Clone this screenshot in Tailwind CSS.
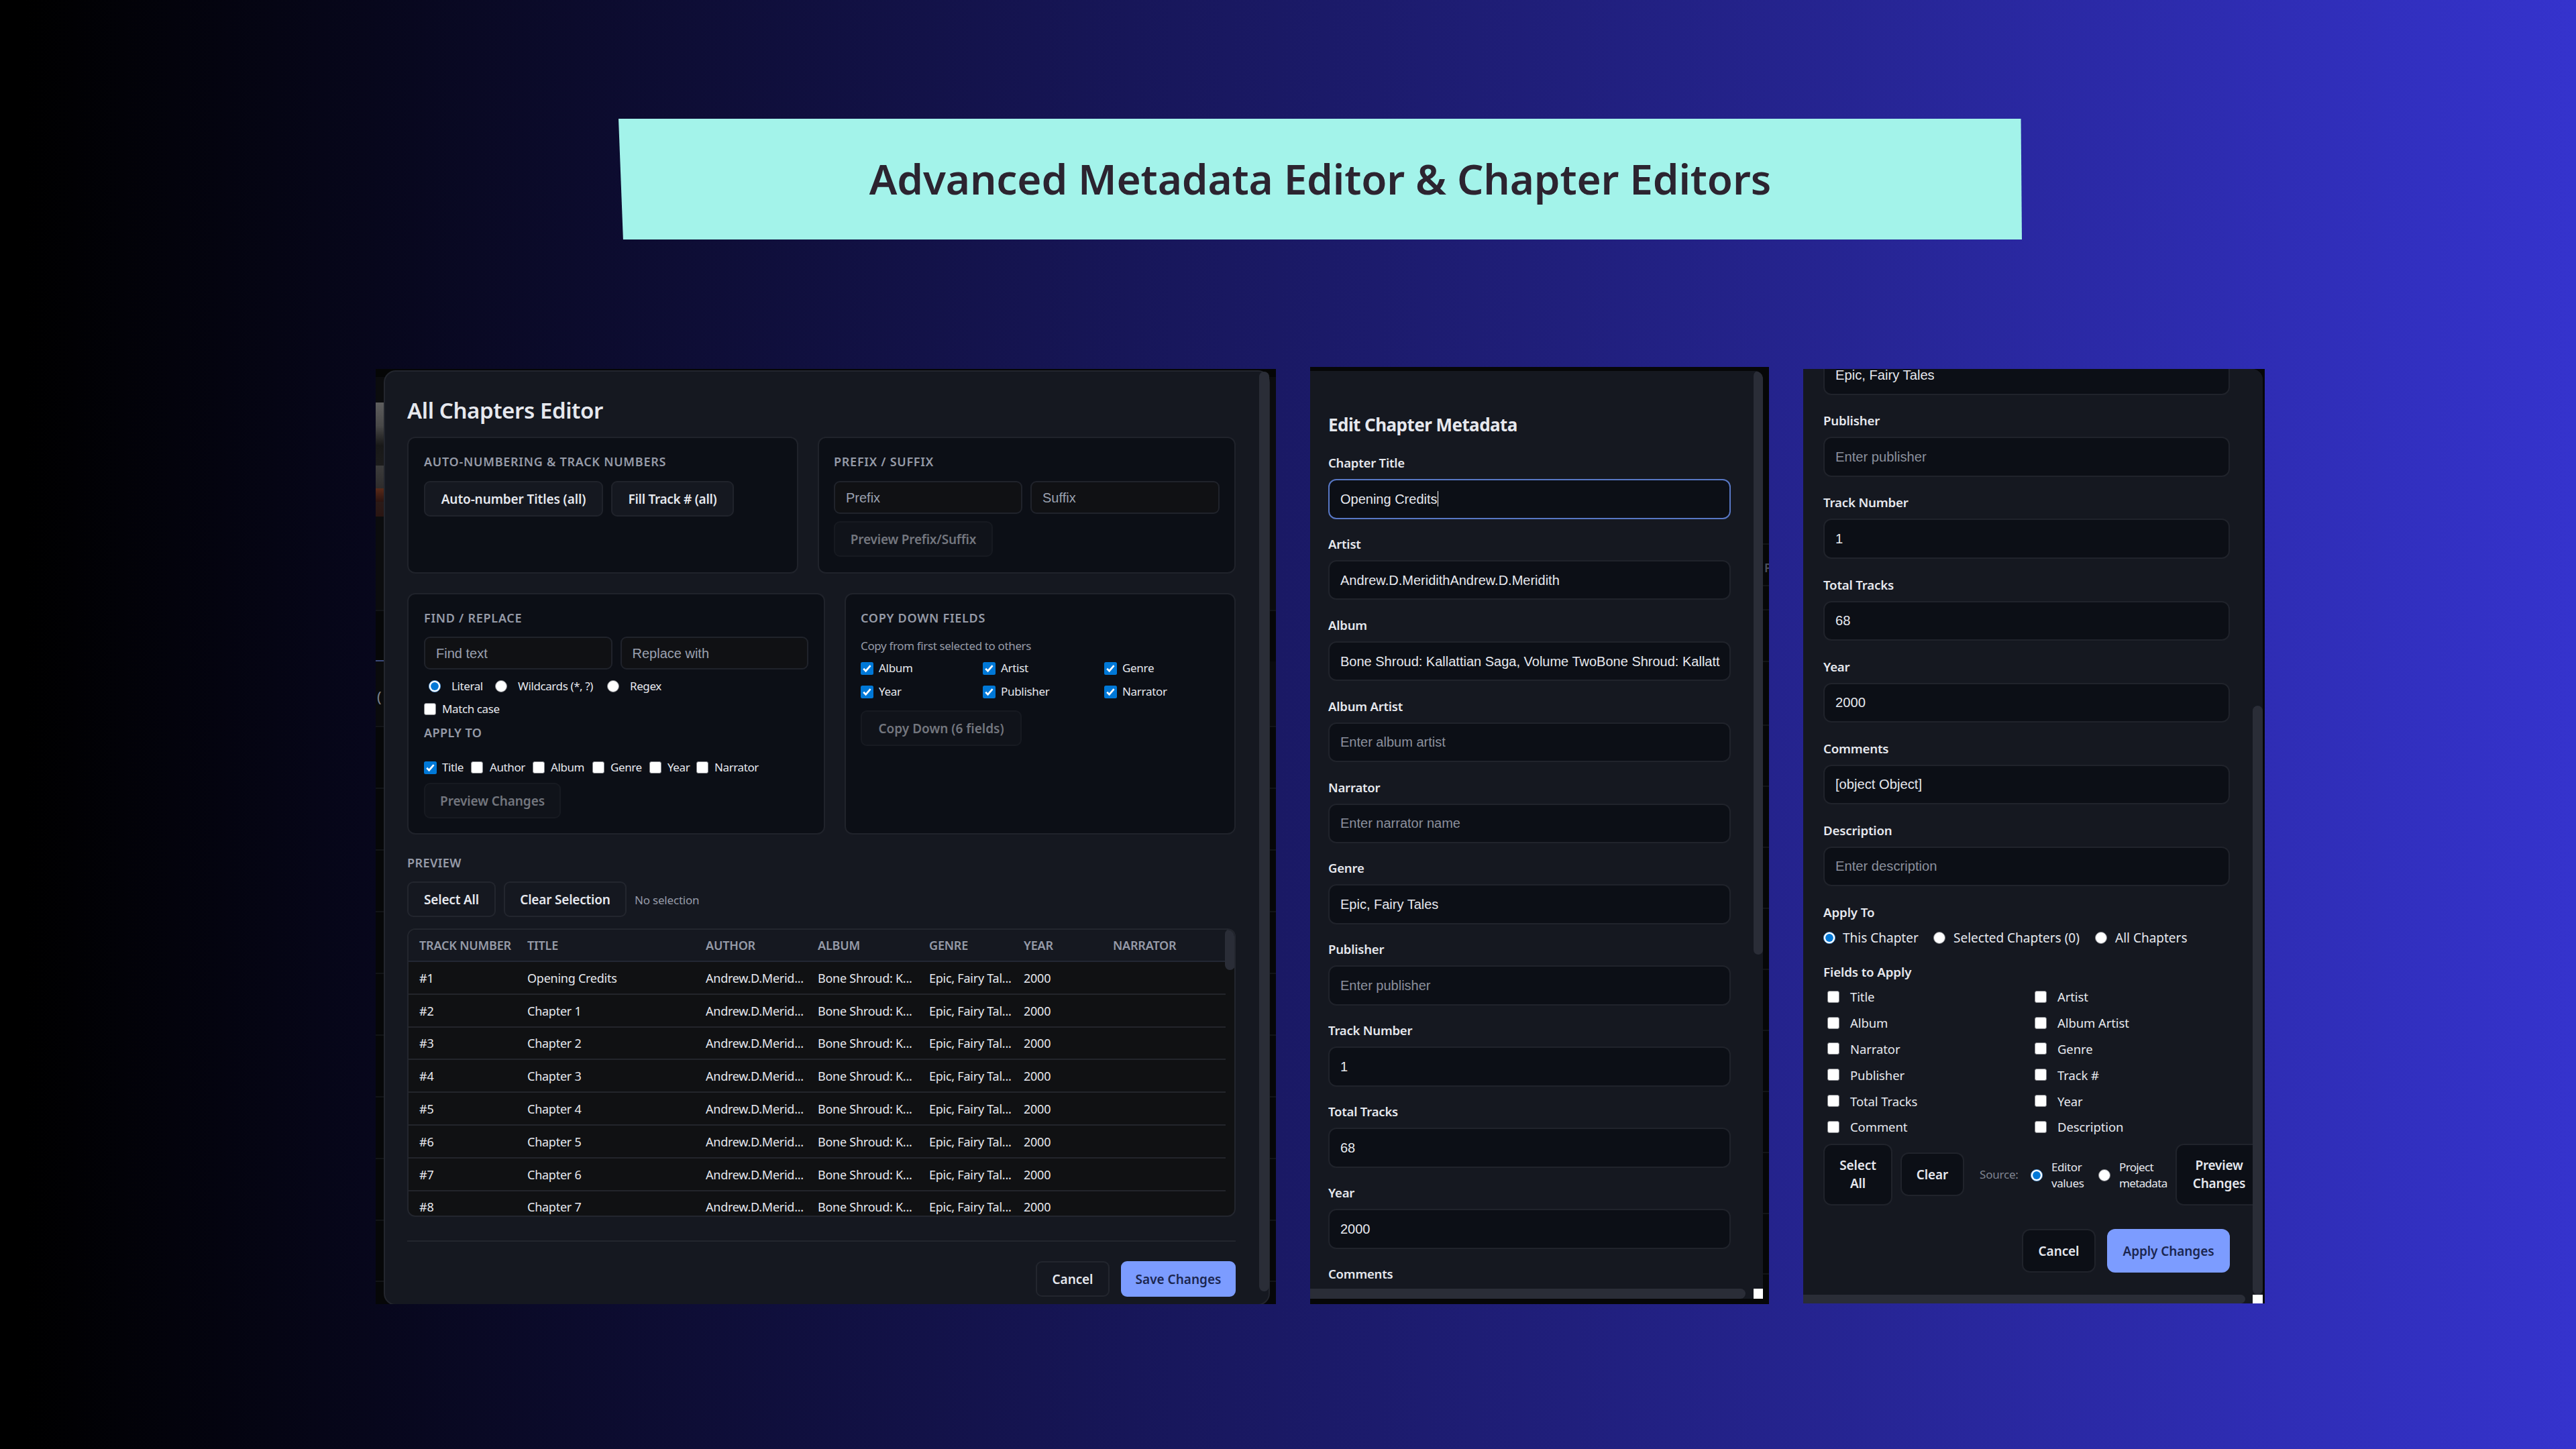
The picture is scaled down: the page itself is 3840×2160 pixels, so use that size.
<!DOCTYPE html>
<html lang="en">
<head>
    <meta charset="UTF-8">
    <meta name="viewport" content="width=device-width, initial-scale=1.0">
    <title>Advanced Metadata Editor & Chapter Editors</title>
    <script src="https://cdn.jsdelivr.net/npm/@tailwindcss/browser@4"></script>
</head>
<body class="w-[3840px] h-[2160px] overflow-hidden bg-linear-to-r/srgb from-black from-1% to-[#3533cd] font-['Noto_Sans',sans-serif] text-[#e6e8ee]">
    <header class="pt-[177px] pl-[922px]">
        <div class="w-[2092px] h-[180px] bg-[#a3f3ea] [clip-path:polygon(0_0,99.93%_0,100%_100%,0.33%_100%)] flex items-center justify-center">
            <h1 class="text-[62px] leading-[90px] pb-[2px] font-semibold tracking-[-0.15px] text-[#2c2430] whitespace-nowrap">Advanced Metadata Editor &amp; Chapter Editors</h1>
        </div>
    </header>

    <main class="flex items-start pl-[560px] pt-[190px]">

        <!-- All chapters editor -->
        <section class="relative w-[1342px] h-[1394px] mt-[3px] pl-[12px] pt-[2px] bg-[#060708] overflow-hidden">
            <!-- page behind the modal -->
            <div id="behindAll" class="absolute inset-0">
                <div class="absolute left-0 top-0 w-full h-[360px] bg-[#0b0c0e]"></div>
                <div class="absolute left-0 top-0 w-full h-[12px] bg-[#050606]"></div>
                <div class="absolute left-0 top-[436px] w-full h-[96px] bg-[#0a0b0d]"></div>
                <div class="absolute left-0 top-[50px] w-[12px] h-[170px] bg-linear-to-b from-[#5e5e5e] via-[#2a2a2a] to-[#2a1512]"></div>
                <div class="absolute left-0 top-[84px] w-[12px] h-[60px] bg-linear-to-b from-[#4a4a4a] via-[#181818] to-[#1c1c1c]"></div>
                <div class="absolute left-0 top-[144px] w-[12px] h-[34px] bg-linear-to-b from-[#3c3c3c] to-[#2e2c2c]"></div>
                <div class="absolute left-0 top-[178px] w-[12px] h-[20px] bg-linear-to-b from-[#5a2a18] to-[#2c1410]"></div>
                <div class="absolute left-0 top-[434px] w-[12px] h-[2px] bg-[#3c4b7c]"></div>
                <span class="absolute left-[2px] top-[474px] text-[22px] leading-[28px] text-[#7b8190]">(</span>
            </div>

            <div class="relative w-[1321px] h-[1394px] bg-[#151820] border-2 border-[#23262e] rounded-[18px] pl-[33px] pt-[38px]">
                <div class="absolute right-[-1px] top-0 w-[15px] h-[1371px] rounded-full bg-[#2a2d37]"></div>

                <div class="w-[1235px]">
                    <h2 class="text-[33px] leading-[40px] font-semibold tracking-[-0.42px] mb-[19px]">All Chapters Editor</h2>

                    <div class="flex gap-[29px] mb-[29px]">
                        <div class="w-[583px] h-[204px] bg-[#0c0f16] border-2 border-[#20232b] rounded-[12px] p-[23px] pt-[22px]">
                            <h3 class="text-[18px] leading-[27px] font-semibold tracking-[0.73px] text-[#969ba8] mb-[15px]">AUTO-NUMBERING &amp; TRACK NUMBERS</h3>
                            <div class="flex gap-[12px]">
                                <button class="w-[267px] h-[53px] pt-[1px] bg-[#151820] border-2 border-[#20232b] rounded-[9px] text-[19px] font-semibold tracking-[-0.1px] whitespace-nowrap">Auto-number Titles (all)</button>
                                <button class="w-[183px] h-[53px] pt-[1px] bg-[#151820] border-2 border-[#20232b] rounded-[9px] text-[19px] font-semibold tracking-[-0.3px] whitespace-nowrap">Fill Track # (all)</button>
                            </div>
                        </div>
                        <div class="w-[623px] h-[204px] bg-[#0c0f16] border-2 border-[#20232b] rounded-[12px] p-[22px]">
                            <h3 class="text-[18px] leading-[27px] font-semibold tracking-[0.73px] text-[#969ba8] mb-[15px]">PREFIX / SUFFIX</h3>
                            <div class="flex gap-[12px] mb-[11px] font-['Liberation_Sans',sans-serif] text-[20px] text-[#9ba1b0]">
                                <div class="w-[281px] h-[49px] bg-[#101114] border-2 border-[#20232b] rounded-[9px] px-[16px] flex items-center">Prefix</div>
                                <div class="w-[282px] h-[49px] bg-[#101114] border-2 border-[#20232b] rounded-[9px] px-[16px] flex items-center">Suffix</div>
                            </div>
                            <button class="w-[237px] h-[53px] pt-[1px] bg-[#10131a] border-2 border-[#171a21] rounded-[9px] text-[19px] font-semibold tracking-[-0.2px] text-[#73767e] whitespace-nowrap">Preview Prefix/Suffix</button>
                        </div>
                    </div>

                    <div class="flex gap-[29px] mb-[29px]">
                        <div class="w-[623px] h-[360px] bg-[#0c0f16] border-2 border-[#20232b] rounded-[12px] p-[23px] pt-[22px] text-[17px] tracking-[-0.4px]">
                            <h3 class="text-[18px] leading-[27px] font-semibold tracking-[0.73px] text-[#969ba8] mb-[14px]">FIND / REPLACE</h3>
                            <div class="flex gap-[12px] font-['Liberation_Sans',sans-serif] text-[20px] tracking-normal text-[#9ba1b0]">
                                <div class="w-[281px] h-[49px] bg-[#101114] border-2 border-[#20232b] rounded-[9px] px-[16px] flex items-center">Find text</div>
                                <div class="w-[281px] h-[49px] bg-[#101114] border-2 border-[#20232b] rounded-[9px] px-[16px] flex items-center">Replace with</div>
                            </div>
                            <div class="flex h-[26px] leading-[26px] mt-[12px] pl-[7px]">
                                <label class="flex items-center w-[99px]"><i data-radio="on"></i><span class="ml-[16px]">Literal</span></label>
                                <label class="flex items-center w-[167px]"><i data-radio="off"></i><span class="ml-[16px] whitespace-nowrap">Wildcards (*, ?)</span></label>
                                <label class="flex items-center"><i data-radio="off"></i><span class="ml-[16px]">Regex</span></label>
                            </div>
                            <label class="flex items-center h-[26px] leading-[26px] mt-[8px]"><i data-check="off"></i><span class="ml-[9px]">Match case</span></label>
                            <h3 class="text-[18px] leading-[27px] font-semibold tracking-[0.4px] text-[#969ba8] mt-[9px]">APPLY TO</h3>
                            <div class="flex h-[26px] leading-[26px] mt-[25px]">
                                <label class="flex items-center w-[70px]"><i data-check="on"></i><span class="ml-[9px]">Title</span></label>
                                <label class="flex items-center w-[92px]"><i data-check="off"></i><span class="ml-[10px]">Author</span></label>
                                <label class="flex items-center w-[89px]"><i data-check="off"></i><span class="ml-[9px]">Album</span></label>
                                <label class="flex items-center w-[85px]"><i data-check="off"></i><span class="ml-[9px]">Genre</span></label>
                                <label class="flex items-center w-[70px]"><i data-check="off"></i><span class="ml-[9px]">Year</span></label>
                                <label class="flex items-center"><i data-check="off"></i><span class="ml-[9px]">Narrator</span></label>
                            </div>
                            <button class="w-[204px] h-[53px] pt-[1px] mt-[10px] bg-[#10131a] border-2 border-[#171a21] rounded-[9px] text-[19px] font-semibold tracking-[-0.1px] text-[#73767e] whitespace-nowrap">Preview Changes</button>
                        </div>
                        <div class="w-[583px] h-[360px] bg-[#0c0f16] border-2 border-[#20232b] rounded-[12px] p-[22px] text-[17px] tracking-[-0.3px]">
                            <h3 class="text-[18px] leading-[27px] font-semibold tracking-[0.73px] text-[#969ba8] mb-[15px]">COPY DOWN FIELDS</h3>
                            <p class="leading-[26px] tracking-[-0.36px] text-[#969ba8] mb-[7px]">Copy from first selected to others</p>
                            <div class="grid grid-cols-[182px_181px_150px] gap-y-[9px] leading-[26px]">
                                <label class="flex items-center"><i data-check="on"></i><span class="ml-[9px]">Album</span></label>
                                <label class="flex items-center"><i data-check="on"></i><span class="ml-[9px]">Artist</span></label>
                                <label class="flex items-center"><i data-check="on"></i><span class="ml-[9px]">Genre</span></label>
                                <label class="flex items-center"><i data-check="on"></i><span class="ml-[9px]">Year</span></label>
                                <label class="flex items-center"><i data-check="on"></i><span class="ml-[9px]">Publisher</span></label>
                                <label class="flex items-center"><i data-check="on"></i><span class="ml-[9px]">Narrator</span></label>
                            </div>
                            <button class="w-[240px] h-[53px] pt-[1px] mt-[15px] bg-[#10131a] border-2 border-[#171a21] rounded-[9px] text-[19px] font-semibold tracking-[0px] text-[#73767e] whitespace-nowrap">Copy Down (6 fields)</button>
                        </div>
                    </div>

                    <h3 class="text-[18px] leading-[27px] font-semibold tracking-[0.4px] text-[#969ba8] mb-[14px]">PREVIEW</h3>
                    <div class="flex items-center gap-[12px] mb-[17px]">
                        <button class="w-[132px] h-[53px] pt-[1px] border-2 border-[#23262e] rounded-[9px] text-[19px] font-semibold tracking-[-0.2px] whitespace-nowrap">Select All</button>
                        <button class="w-[183px] h-[53px] pt-[1px] border-2 border-[#23262e] rounded-[9px] text-[19px] font-semibold tracking-[-0.2px] whitespace-nowrap">Clear Selection</button>
                        <span class="pt-[2px] text-[17px] tracking-[-0.2px] text-[#969ba8]">No selection</span>
                    </div>

                    <div class="relative h-[430px] bg-[#101113] border-2 border-[#23262e] rounded-[12px] overflow-hidden">
                        <div class="grid grid-cols-[161px_266px_167px_166px_141px_133px_1fr] h-[48px] pl-[16px] items-center bg-[#151820] border-b-2 border-[#222733] text-[18px] font-semibold tracking-[-0.19px] text-[#969ba8]">
                            <span>TRACK NUMBER</span><span>TITLE</span><span>AUTHOR</span><span>ALBUM</span><span>GENRE</span><span>YEAR</span><span>NARRATOR</span>
                        </div>
                        <div id="chapterRows" class="w-[1218px]"></div>
                        <div class="absolute right-[-1px] top-[-1px] w-[15px] h-[61px] rounded-full bg-[#2a2d37]"></div>
                    </div>

                    <div class="mt-[35px] pt-[29px] border-t-2 border-[#23262e] flex justify-end gap-[17px]">
                        <button class="w-[110px] h-[53px] pt-[1px] border-2 border-[#23262e] rounded-[9px] text-[19px] font-semibold tracking-[-0.1px]">Cancel</button>
                        <button class="w-[171px] h-[53px] pt-[1px] bg-[#7c9cff] rounded-[9px] text-[19px] font-semibold tracking-[0px] text-[#1b2650] whitespace-nowrap">Save Changes</button>
                    </div>
                </div>
            </div>
        </section>

        <!-- Chapter metadata, scrolled to the top -->
        <section class="relative w-[684px] h-[1397px] ml-[51px] pt-[6px] bg-[#060708] overflow-hidden">
            <div id="behindTop" class="absolute right-0 top-0 w-[9px] h-full">
                <span class="absolute left-[2px] top-[287px] text-[18px] leading-[24px] font-semibold text-[#4c505a]">P</span>
            </div>
            <div class="relative w-[675px] h-[1383px] bg-[#151820] rounded-tr-[12px] pl-[27px] pt-[60px] overflow-hidden">
                <h2 class="text-[26px] leading-[40px] font-bold tracking-[-0.55px] mb-[23px]">Edit Chapter Metadata</h2>
                <div id="fieldsTop" class="w-[600px]"></div>
                <div class="absolute right-0 top-0 w-[14px] h-[870px] rounded-full bg-[#2a2d37]"></div>
                <div class="absolute left-0 bottom-0 w-[675px] h-[15px] bg-[#151820]">
                    <div class="w-[649px] h-full rounded-r-full bg-[#2a2d37]"></div>
                    <div class="absolute right-0 top-0 w-[14px] h-[15px] bg-white"></div>
                </div>
            </div>
        </section>

        <!-- Chapter metadata, scrolled to the bottom -->
        <section class="relative w-[688px] h-[1393px] mt-[3px] ml-[51px] bg-[#060708] overflow-hidden">
            <div class="relative w-[685px] h-[1393px] bg-[#151820] rounded-tr-[16px] pl-[30px] overflow-hidden">
                <div class="w-[606px]">
                    <div class="h-[60px] mt-[-21px] mb-[24.4px] bg-[#0c0f16] border-2 border-[#20232b] rounded-[12px] px-[16px] flex items-center font-['Liberation_Sans',sans-serif] text-[20.2px]">Epic, Fairy Tales</div>
                    <div id="fieldsBottom"></div>

                    <h3 class="text-[18.7px] leading-[28px] font-semibold tracking-[-0.1px]">Apply To</h3>
                    <div class="flex h-[28px] mt-[10px] items-center text-[19px] whitespace-nowrap">
                        <label class="flex items-center w-[164px]"><i data-radio="on"></i><span class="ml-[11px] pt-[1px]">This Chapter</span></label>
                        <label class="flex items-center w-[241px]"><i data-radio="off"></i><span class="ml-[12px] pt-[1px]">Selected Chapters (0)</span></label>
                        <label class="flex items-center"><i data-radio="off"></i><span class="ml-[12px] pt-[1px]">All Chapters</span></label>
                    </div>

                    <h3 class="text-[18.7px] leading-[28px] font-semibold tracking-[-0.1px] mt-[23px] mb-[9px]">Fields to Apply</h3>
                    <div id="applyFields" class="grid grid-cols-[309px_1fr] gap-y-[10.8px] pl-[6px] text-[18.5px] tracking-[-0.1px]"></div>

                    <div class="flex items-center mt-[11px] w-[655px]">
                        <button class="shrink-0 w-[103px] h-[92px] pt-[1px] bg-[#0c0f16] border-2 border-[#20232b] rounded-[12px] text-[19px] leading-[27.5px] font-semibold tracking-[-0.1px]">Select<br>All</button>
                        <button class="shrink-0 w-[95px] h-[65px] pt-[1px] ml-[12px] bg-[#0c0f16] border-2 border-[#20232b] rounded-[12px] text-[19px] font-semibold tracking-[-0.1px]">Clear</button>
                        <span class="ml-[23px] w-[78px] text-[17px] tracking-[-0.2px] text-[#7f8491]">Source:</span>
                        <label class="shrink-0 flex items-center w-[101px] pt-[2px] text-[17px] leading-[23.5px] tracking-[-0.4px]"><i data-radio="on"></i><span class="ml-[13px]">Editor<br>values</span></label>
                        <label class="shrink-0 flex items-center w-[115px] pt-[2px] text-[17px] leading-[23.5px] tracking-[-0.65px]"><i data-radio="off"></i><span class="ml-[13px]">Project<br>metadata</span></label>
                        <button class="shrink-0 w-[130px] h-[92px] pt-[1px] bg-[#0c0f16] border-2 border-[#20232b] rounded-[12px] text-[19px] leading-[27.5px] font-semibold tracking-[-0.2px]">Preview<br>Changes</button>
                    </div>

                    <div class="flex justify-end gap-[17px] mt-[35px]">
                        <button class="w-[110px] h-[65px] pt-[1px] bg-[#0c0f16] border-2 border-[#20232b] rounded-[12px] text-[19px] font-semibold tracking-[-0.1px]">Cancel</button>
                        <button class="w-[183px] h-[65px] pt-[1px] bg-[#7c9cff] rounded-[12px] text-[19px] font-semibold tracking-[-0.1px] text-[#1b2650] whitespace-nowrap">Apply Changes</button>
                    </div>
                </div>

                <div class="absolute right-0 top-0 w-[15px] h-full bg-[#151820] rounded-tr-[16px]">
                    <div class="absolute left-0 top-[502px] w-[15px] h-[878px] rounded-full bg-[#2a2d37]"></div>
                </div>
                <div class="absolute left-0 bottom-0 w-[685px] h-[13px] bg-[#151820]">
                    <div class="w-[659px] h-full rounded-r-full bg-[#2a2d37]"></div>
                    <div class="absolute right-0 top-0 w-[15px] h-[13px] bg-white"></div>
                </div>
            </div>
        </section>
    </main>

    <script>
        // form controls
        const checkOn = '<svg class="w-[19px] h-[19px] -mr-[1px] shrink-0" viewBox="0 0 19 19"><rect width="19" height="19" rx="2.5" fill="#0078d7"/><path d="M4.2 9.8l3.4 3.4 7-8" fill="none" stroke="#fff" stroke-width="2.7"/></svg>';
        const checkOff = '<span class="block w-[18px] h-[18px] shrink-0 bg-white border border-[#85878c] rounded-[3px]"></span>';
        const radioOn = '<svg class="w-[18px] h-[18px] shrink-0" viewBox="0 0 18 18"><circle cx="9" cy="9" r="8.6" fill="#fff" stroke="#4a9be3" stroke-width=".8"/><circle cx="9" cy="9" r="5.9" fill="#0078d7"/></svg>';
        const radioOff = '<span class="block w-[18px] h-[18px] shrink-0 bg-white border border-[#85878c] rounded-full"></span>';

        // chapter table
        const rows = document.getElementById('chapterRows');
        for (let i = 1; i <= 8; i++) {
            rows.insertAdjacentHTML('beforeend', `
                <div class="grid grid-cols-[161px_266px_167px_166px_141px_1fr] h-[48.8px] pl-[16px] pt-[2px] items-center border-b-2 border-[#23252b] text-[18px] tracking-[-0.25px] whitespace-nowrap">
                    <span>#${i}</span>
                    <span>${i === 1 ? 'Opening Credits' : 'Chapter ' + (i - 1)}</span>
                    <span>Andrew.D.Merid...</span>
                    <span>Bone Shroud: K...</span>
                    <span>Epic, Fairy Tal...</span>
                    <span>2000</span>
                </div>`);
        }

        // chapter metadata fields: label, value, placeholder
        const fieldsTop = [
            ['Chapter Title', 'Opening Credits', ''],
            ['Artist', 'Andrew.D.MeridithAndrew.D.Meridith', ''],
            ['Album', 'Bone Shroud: Kallattian Saga, Volume TwoBone Shroud: Kallatt', ''],
            ['Album Artist', '', 'Enter album artist'],
            ['Narrator', '', 'Enter narrator name'],
            ['Genre', 'Epic, Fairy Tales', ''],
            ['Publisher', '', 'Enter publisher'],
            ['Track Number', '1', ''],
            ['Total Tracks', '68', ''],
            ['Year', '2000', ''],
            ['Comments', '', ''],
        ];
        fieldsTop.forEach(([label, value, hint], i) => {
            const border = i === 0 ? 'border-[#5877c4]' : 'border-[#20232b]';
            const caret = i === 0 ? '<span class="w-[1.5px] h-[23px] bg-white shrink-0"></span>' : '';
            document.getElementById('fieldsTop').insertAdjacentHTML('beforeend', `
                <div class="mb-[23.4px]">
                    <div class="text-[18.5px] leading-[28px] font-semibold tracking-[-0.2px] mb-[10px]">${label}</div>
                    <div class="h-[59.5px] bg-[#0c0f16] border-2 ${border} rounded-[12px] pl-[16px] flex items-center font-['Liberation_Sans',sans-serif] text-[20px]">
                        <span class="whitespace-nowrap ${value ? '' : 'text-[#8b909d]'}">${value || hint}</span>${caret}
                    </div>
                </div>`);
        });

        const fieldsBottom = [
            ['Publisher', '', 'Enter publisher'],
            ['Track Number', '1', ''],
            ['Total Tracks', '68', ''],
            ['Year', '2000', ''],
            ['Comments', '[object Object]', ''],
            ['Description', '', 'Enter description'],
        ];
        fieldsBottom.forEach(([label, value, hint]) => {
            document.getElementById('fieldsBottom').insertAdjacentHTML('beforeend', `
                <div class="mb-[24.4px]">
                    <div class="text-[18.7px] leading-[28px] font-semibold tracking-[-0.2px] mb-[10px]">${label}</div>
                    <div class="h-[59.7px] bg-[#0c0f16] border-2 border-[#20232b] rounded-[12px] px-[16px] flex items-center font-['Liberation_Sans',sans-serif] text-[20.2px]">
                        <span class="${value ? '' : 'text-[#8b909d]'}">${value || hint}</span>
                    </div>
                </div>`);
        });

        ['Title', 'Artist', 'Album', 'Album Artist', 'Narrator', 'Genre', 'Publisher', 'Track #', 'Total Tracks', 'Year', 'Comment', 'Description'].forEach(name => {
            document.getElementById('applyFields').insertAdjacentHTML('beforeend',
                `<label class="flex items-center h-[28px]"><i data-check="off"></i><span class="ml-[16px] pt-[1px]">${name}</span></label>`);
        });

        document.querySelectorAll('[data-check]').forEach(el => el.outerHTML = el.dataset.check === 'on' ? checkOn : checkOff);
        document.querySelectorAll('[data-radio]').forEach(el => el.outerHTML = el.dataset.radio === 'on' ? radioOn : radioOff);

        // row separators of the page behind the modals
        const line = (id, y) => document.getElementById(id).insertAdjacentHTML('beforeend',
            `<div class="absolute left-0 w-full h-[2px] bg-[#121417]" style="top:${y}px"></div>`);
        [359, 532, 624, 716, 808, 900, 992, 1084, 1176, 1268, 1359].forEach(y => line('behindAll', y));
        [263, 325, 361, 438, 533, 624, 715, 806, 897, 988, 1079, 1170, 1261, 1351].forEach(y => line('behindTop', y));
    </script>
</body>
</html>
